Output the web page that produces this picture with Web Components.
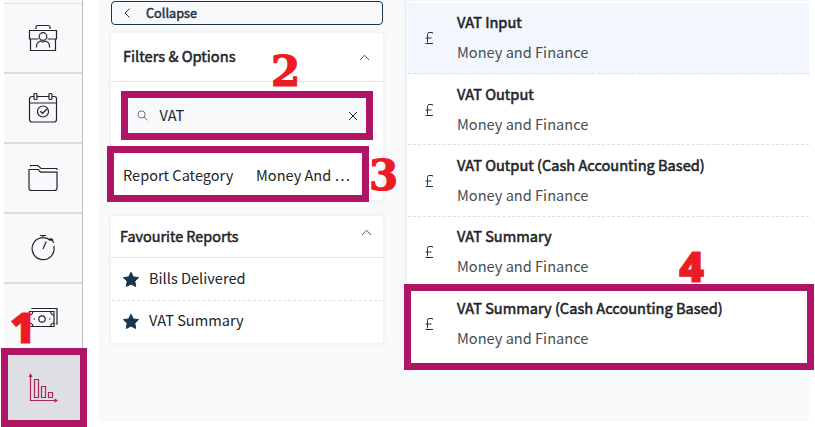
<!DOCTYPE html>
<html lang="en">
<head>
<meta charset="utf-8">
<title>Reports</title>
<style>
    body {
        margin: 0;
        background: #fff;
        font-family: "Noto Sans CJK SC", "Noto Sans", sans-serif;
        color: #212529;
    }
</style>
</head>
<body>
<reports-app></reports-app>

<script>
// Line icons, drawn on the pixel grid of their own viewBox
const ICONS = {
    contacts: `<svg width="30" height="28" viewBox="0 0 30 28"><path d="M8 5V3.5Q8 1.5 10 1.5H20Q22 1.5 22 3.5V5M10.5 15H1.500V6.500H28.500V15H19.500M2.500 15V26.500H27.500V15"/><circle cx="15" cy="12.500" r="3.800"/><path d="M8.500 23.500V22Q8.500 18.500 12.500 17Q15 19 17.500 17Q21.500 18.500 21.500 22V23.500"/></svg>`,
    calendar: `<svg width="30" height="32" viewBox="0 0 30 32"><path d="M6 4.500H4Q1.500 4.500 1.500 7V27.500Q1.500 30 4 30H26Q28.500 30 28.500 27.500V7Q28.500 4.500 26.500 4.500H24M9 4.500H21M1.500 11H28.500"/><rect x="6" y="1.500" width="3" height="6" rx="1"/><rect x="21" y="1.500" width="3" height="6" rx="1"/><circle cx="15" cy="19.500" r="5.500"/><path d="M12.300 19.200L14.500 21.300L19 17"/></svg>`,
    folder: `<svg width="30" height="28" viewBox="0 0 30 28"><path d="M2.500 2.500V1.500H10L13 4.500H29M1 6V24Q1 26.500 3.500 26.500H26.500Q29 26.500 29 24V8.200H13.500Q12 8.200 11.500 7L10.500 5.500H1V7M29 4.500V6"/></svg>`,
    timer: `<svg width="30" height="28" viewBox="0 0 30 28"><path d="M22.500 6.500A11 11 0 1 0 25.800 12M12 1.500H18M15 1.500V4M15 15L18.300 7.500M20.500 5L24.500 6.500L25.800 9"/><path d="M22 4.500L25 6.500" stroke-width="2"/></svg>`,
    money: `<svg width="30" height="22" viewBox="0 0 30 22"><path d="M1.500 4.500H26V19.500H1.500ZM4 2V1.500H29V17H27.500M1.500 8Q4.500 8 5 4.500M22.500 4.500Q23 8 26 8M1.500 16Q4.500 16 5 19.500M22.500 19.500Q23 16 26 16"/><circle cx="14" cy="12" r="3.200"/><path d="M5.500 12H7M21 12H22.500"/></svg>`,
    chart: `<svg width="30" height="30" viewBox="0 0 30 30"><path d="M2.500 2V27.500H28M1 4L2.500 1.500L4 4M26.500 26L29 27.500L26.500 29"/><path d="M6.500 6.500H10.500V24.500H6.500ZM13.500 13.500H17.500V24.500H13.500ZM20.500 19.500H24.500V24.500H20.500Z"/></svg>`,
    left: `<svg width="7" height="10" viewBox="0 0 7 10"><path d="M5.500 .5L1 5L5.500 9.500"/></svg>`,
    up: `<svg width="11" height="7" viewBox="0 0 11 7"><path d="M1 6L5.500 1.200L10 6"/></svg>`,
    search: `<svg width="11" height="11" viewBox="0 0 11 11"><circle cx="4.500" cy="4.500" r="3.600"/><path d="M7.200 7.200L10.300 10.300"/></svg>`,
    close: `<svg width="10" height="10" viewBox="0 0 10 10"><path d="M1 1L9 9M9 1L1 9"/></svg>`,
    star: `<svg width="18" height="17" viewBox="0 0 18 17"><path fill="currentColor" stroke-linejoin="round" d="M9 1.200L11.300 5.900L16.600 6.600L12.800 10.200L13.700 15.500L9 13L4.300 15.500L5.200 10.200L1.400 6.600L6.700 5.900Z"/></svg>`,
    pound: `<svg width="9" height="12" viewBox="0 0 9 12"><path d="M7.500 1.500V.5H4Q2.500 .5 2.500 2.500V10.500M.5 11.500H8M.5 6H6.500"/></svg>`
};

class AppIcon extends HTMLElement {
    constructor() {
        super();
        this.attachShadow({ mode: "open" });
        this.shadowRoot.innerHTML = `
        <style>
          :host { display: inline-flex; flex: none; }
          svg { display: block; fill: none; stroke: currentColor; stroke-width: var(--stroke, 1); }
        </style>
        ${ICONS[this.getAttribute("name")] || ""}
      `;
    }
}
customElements.define("app-icon", AppIcon);

class NavItem extends HTMLElement {
    constructor() {
        super();
        this.attachShadow({ mode: "open" });
        this.shadowRoot.innerHTML = `
        <style>
          :host {
            display: flex;
            align-items: center;
            justify-content: center;
            box-sizing: border-box;
            height: 70px;
            border-bottom: 2px solid #dcdde0;
            color: #212529;
            --stroke: 1.2;
          }
          :host([active]) { background: #dedfe2; color: #a8275a; border-bottom: 0; padding-bottom: 2px; }
        </style>
        <app-icon name="${this.getAttribute("icon")}"></app-icon>
      `;
    }
}
customElements.define("nav-item", NavItem);

class SideNav extends HTMLElement {
    constructor() {
        super();
        this.attachShadow({ mode: "open" });
        this.shadowRoot.innerHTML = `
        <style>
          :host {
            display: block;
            box-sizing: border-box;
            width: 79px;
            height: 422px;
            background: #f8f9fb;
            border-right: 1px solid #b9bbbf;
            overflow: hidden;
          }
          .top { height: 3px; border-bottom: 1px solid #dcdde0; }
        </style>
        <div class="top"></div>
        <slot></slot>
      `;
    }
}
customElements.define("side-nav", SideNav);

class CollapseButton extends HTMLElement {
    constructor() {
        super();
        this.attachShadow({ mode: "open" });
        this.shadowRoot.innerHTML = `
        <style>
          :host {
            display: flex;
            align-items: center;
            gap: 15px;
            box-sizing: border-box;
            height: 24px;
            padding-left: 12px;
            border: 1px solid #1a364d;
            border-radius: 4px;
            color: #1a364d;
            font-size: 12.7px;
            line-height: 20px;
            -webkit-text-stroke: 0.5px;
          }
        </style>
        <app-icon name="left"></app-icon>
        <span><slot></slot></span>
      `;
    }
}
customElements.define("collapse-button", CollapseButton);

class PanelCard extends HTMLElement {
    constructor() {
        super();
        this.attachShadow({ mode: "open" });
        this.shadowRoot.innerHTML = `
        <style>
          :host {
            display: block;
            box-sizing: border-box;
            background: #fff;
            border-radius: 4px;
            box-shadow: 0 0 5px rgba(40, 50, 70, 0.09);
          }
          header {
            display: flex;
            justify-content: space-between;
            align-items: center;
            box-sizing: border-box;
            height: var(--head-height, 49px);
            padding: 0 var(--icon-pad, 13px) 0 var(--head-pad, 12px);
            border-bottom: 1px solid #e1e3e5;
            font-size: var(--head-size, 14.65px);
            line-height: 20px;
            -webkit-text-stroke: 0.5px;
          }
          span { margin-top: -2px; }
          app-icon { color: #555; margin-top: var(--icon-shift, 0); }
        </style>
        <header><span>${this.getAttribute("heading")}</span><app-icon name="up"></app-icon></header>
        <slot></slot>
      `;
    }
}
customElements.define("panel-card", PanelCard);

class SearchBox extends HTMLElement {
    constructor() {
        super();
        this.attachShadow({ mode: "open" });
        this.shadowRoot.innerHTML = `
        <style>
          :host {
            display: flex;
            align-items: center;
            box-sizing: border-box;
            height: 35px;
            margin: 16px 17px 0;
            padding: 0 8px 0 9px;
            background: #f8f9fb;
            font-size: 14.55px;
            line-height: 20px;
          }
          span { flex: 1; margin: -2px 0 0 11.5px; }
          .find { color: #64707c; }
        </style>
        <app-icon class="find" name="search"></app-icon>
        <span><slot></slot></span>
        <app-icon name="close"></app-icon>
      `;
    }
}
customElements.define("search-box", SearchBox);

class FilterRow extends HTMLElement {
    constructor() {
        super();
        this.attachShadow({ mode: "open" });
        this.shadowRoot.innerHTML = `
        <style>
          :host {
            display: grid;
            grid-template-columns: 133px 1fr;
            align-items: center;
            box-sizing: border-box;
            height: 47px;
            margin: 18px 12px 0;
            border-top: 1px solid #e1e3e5;
            font-size: 14.55px;
            line-height: 20px;
          }
        </style>
        <span>${this.getAttribute("label")}</span>
        <span><slot></slot></span>
      `;
    }
}
customElements.define("filter-row", FilterRow);

class FavouriteItem extends HTMLElement {
    constructor() {
        super();
        this.attachShadow({ mode: "open" });
        this.shadowRoot.innerHTML = `
        <style>
          :host {
            display: flex;
            align-items: center;
            gap: 9px;
            box-sizing: border-box;
            height: 43px;
            margin: 0 1px;
            padding-left: 10px;
            border-bottom: 1px dashed #dfe2e5;
            font-size: 14.6px;
            line-height: 20px;
          }
          :host(:last-child) { border-bottom: 0; height: 42px; padding-bottom: 2px; }
          app-icon { color: #1a364d; }
          span { margin-top: -2px; }
        </style>
        <app-icon name="star"></app-icon>
        <span><slot></slot></span>
      `;
    }
}
customElements.define("favourite-item", FavouriteItem);

class ReportRow extends HTMLElement {
    constructor() {
        super();
        this.attachShadow({ mode: "open" });
        this.shadowRoot.innerHTML = `
        <style>
          :host {
            display: flex;
            align-items: center;
            box-sizing: border-box;
            height: 71.4px;
            padding-left: 17px;
            border-bottom: 1px dashed #dde0e4;
          }
          :host([selected]) { background: #f2f7fe; }
          :host(:last-child) { border-bottom: 0; }
          app-icon { color: #1a364d; margin-top: 1px; }
          .text { margin: 0 0 2px 23px; font-size: 14.6px; }
          .title { line-height: 30px; color: #212529; -webkit-text-stroke: 0.55px; }
          .group { line-height: 29px; color: #4a4d52; }
        </style>
        <app-icon name="pound"></app-icon>
        <div class="text">
          <div class="title"><slot></slot></div>
          <div class="group">${this.getAttribute("group")}</div>
        </div>
      `;
    }
}
customElements.define("report-row", ReportRow);

class ReportList extends HTMLElement {
    constructor() {
        super();
        this.attachShadow({ mode: "open" });
        this.shadowRoot.innerHTML = `
        <style>
          :host {
            display: block;
            box-sizing: border-box;
            height: 362px;
            padding: 1.5px 0 0 1px;
            background: #fff;
            border-radius: 4px 0 0 0;
            box-shadow: -1px 0 4px rgba(40, 50, 70, 0.09);
          }
        </style>
        <slot></slot>
      `;
    }
}
customElements.define("report-list", ReportList);

// Outline and step number laid over the page
class StepMark extends HTMLElement {
    constructor() {
        super();
        this.attachShadow({ mode: "open" });
        const [x, y, w, h] = this.getAttribute("box").split(" ");
        const [nx, ny] = this.getAttribute("number").split(" ");
        this.shadowRoot.innerHTML = `
        <style>
          :host { display: block; }
          .box {
            position: absolute;
            left: ${x}px;
            top: ${y}px;
            width: ${w}px;
            height: ${h}px;
            box-sizing: border-box;
            border: 7px solid #b01465;
          }
          .number {
            position: absolute;
            left: ${nx}px;
            top: ${ny}px;
            color: #ed1c24;
            font: bold 42px/50px "DejaVu Serif", serif;
            -webkit-text-stroke: 1.2px;
          }
          :host([plain]) .number {
            font: 800 43px/50px "Open Sans", sans-serif;
            -webkit-text-stroke: 1px;
          }
        </style>
        <div class="box"></div>
        <div class="number"><slot></slot></div>
      `;
    }
}
customElements.define("step-mark", StepMark);

class ReportsApp extends HTMLElement {
    constructor() {
        super();
        this.attachShadow({ mode: "open" });
        this.shadowRoot.innerHTML = `
        <style>
          :host {
            display: block;
            position: relative;
            width: 815px;
            height: 427px;
            overflow: hidden;
          }
          .page { display: flex; gap: 16px; padding-left: 4px; }
          main {
            display: grid;
            grid-template-columns: 272px 1fr;
            align-items: start;
            gap: 24px;
            box-sizing: border-box;
            width: 710px;
            height: 422px;
            padding: 1px 0 0 12px;
            background: #f8f9fb;
            overflow: hidden;
          }
          .filters { height: 167px; margin-top: 8px; }
          .favourites { height: 127px; margin-top: 16px; --head-height: 42px; --head-size: 14.4px; --head-pad: 9px; --icon-shift: -9px; --icon-pad: 11px; }
        </style>
        <div class="page">
          <side-nav>
            <nav-item icon="contacts"></nav-item>
            <nav-item icon="calendar"></nav-item>
            <nav-item icon="folder"></nav-item>
            <nav-item icon="timer"></nav-item>
            <nav-item icon="money"></nav-item>
            <nav-item icon="chart" active></nav-item>
          </side-nav>
          <main>
            <div>
              <collapse-button>Collapse</collapse-button>
              <panel-card class="filters" heading="Filters &amp; Options">
                <search-box>VAT</search-box>
                <filter-row label="Report Category">Money And …</filter-row>
              </panel-card>
              <panel-card class="favourites" heading="Favourite Reports">
                <favourite-item>Bills Delivered</favourite-item>
                <favourite-item>VAT Summary</favourite-item>
              </panel-card>
            </div>
            <report-list>
              <report-row group="Money and Finance" selected>VAT Input</report-row>
              <report-row group="Money and Finance">VAT Output</report-row>
              <report-row group="Money and Finance">VAT Output (Cash Accounting Based)</report-row>
              <report-row group="Money and Finance">VAT Summary</report-row>
              <report-row group="Money and Finance">VAT Summary (Cash Accounting Based)</report-row>
            </report-list>
          </main>
        </div>
        <step-mark box="1 348 86 79" number="10 302" plain>1</step-mark>
        <step-mark box="121 91 252 49" number="271 47">2</step-mark>
        <step-mark box="107 146 262 56" number="369 151">3</step-mark>
        <step-mark box="404 284 410 86" number="679 241" plain>4</step-mark>
      `;
    }
}
customElements.define("reports-app", ReportsApp);
</script>
</body>
</html>
